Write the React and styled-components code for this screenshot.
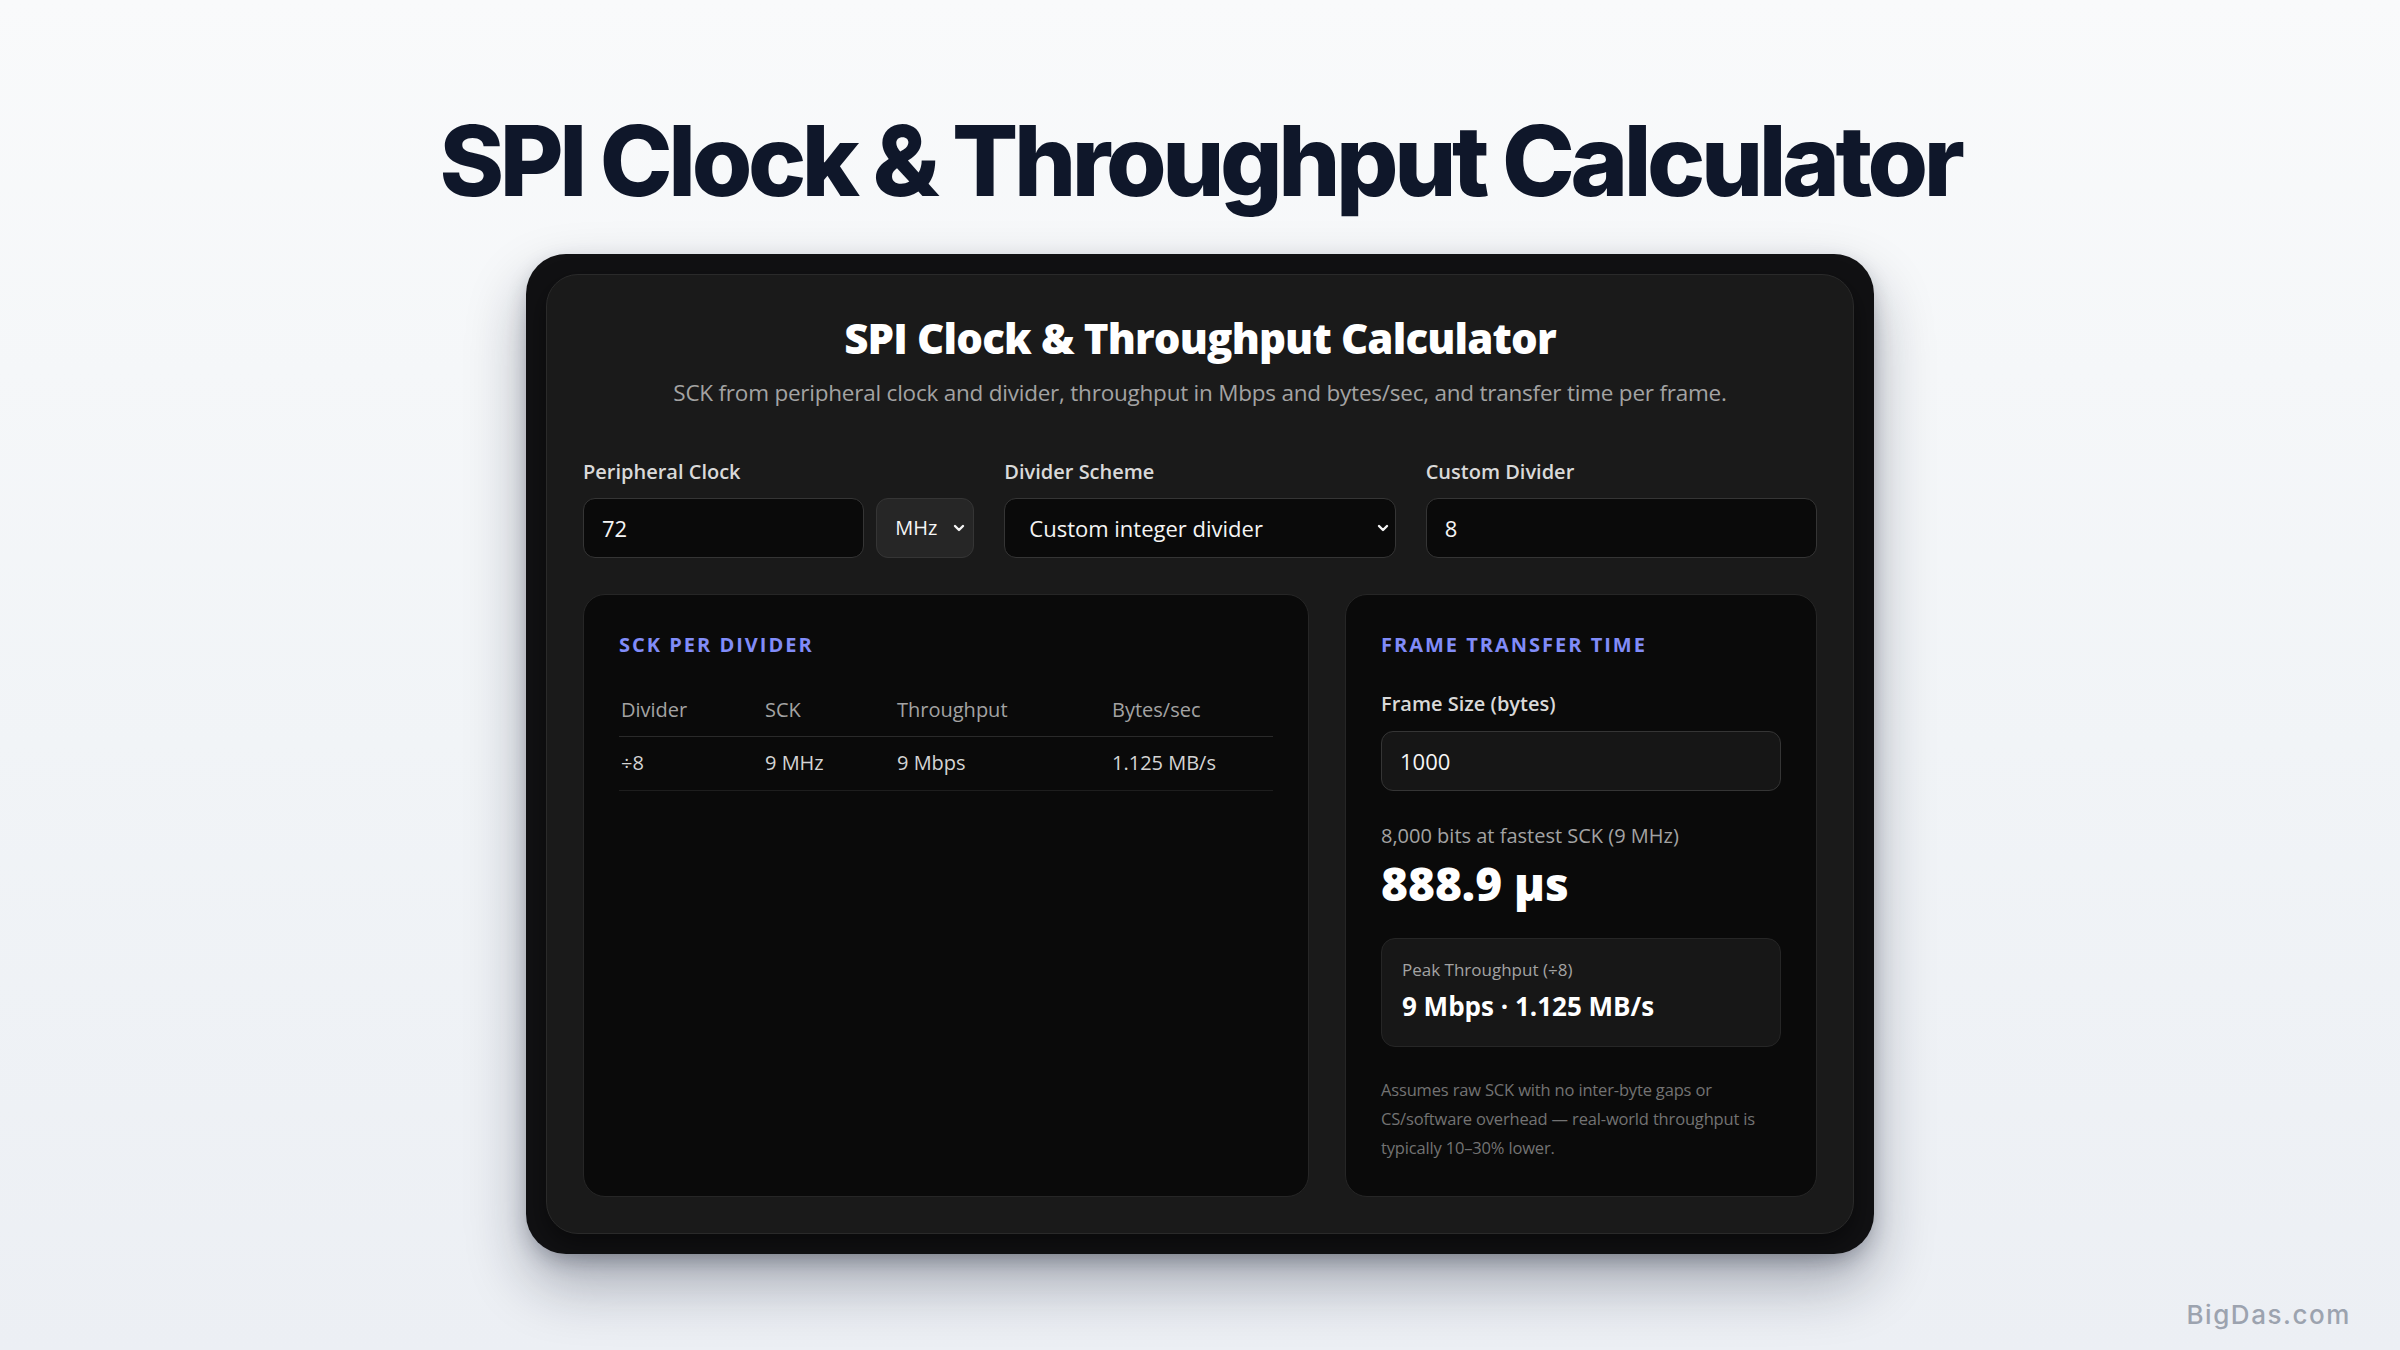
import React, { useState } from "react";
import styled, { createGlobalStyle } from "styled-components";

const GlobalStyle = createGlobalStyle`
  * { box-sizing: border-box; }
  html, body { margin: 0; padding: 0; }
  body {
    font-family: "Open Sans", "Noto Sans", sans-serif;
    -webkit-font-smoothing: antialiased;
  }
`;

const Page = styled.div`
  position: relative;
  min-height: 1350px;
  display: flex;
  flex-direction: column;
  align-items: center;
  padding-top: 102px;
  background: linear-gradient(180deg, #f9fafb 0%, #f1f4f7 55%, #eceff4 100%);
`;

const PageTitle = styled.h1`
  margin: 0;
  font-family: Inter, "Noto Sans", sans-serif;
  font-weight: 800;
  font-size: 98px;
  line-height: 1.2;
  letter-spacing: -0.045em;
  color: #0f172a;
`;

const Frame = styled.div`
  margin-top: 34px;
  width: 1348px;
  padding: 20px;
  background: #111113;
  border-radius: 40px;
  box-shadow: 0 30px 60px rgba(15, 23, 42, 0.32), 0 8px 20px rgba(15, 23, 42, 0.18);
`;

const Card = styled.div`
  background: #1a1a1a;
  border: 1.5px solid #2a2a2a;
  border-radius: 32px;
  padding: 38px 36px 36.5px;
  box-shadow: 0 10px 24px rgba(0, 0, 0, 0.45);
`;

const CardTitle = styled.h2`
  margin: 0;
  text-align: center;
  font-weight: 800;
  font-size: 42px;
  line-height: 1.2;
  letter-spacing: -0.02em;
  color: #ffffff;
`;

const Subtitle = styled.p`
  margin: 13px 0 0;
  text-align: center;
  font-size: 22.5px;
  line-height: 1.5;
  letter-spacing: -0.01em;
  color: #a3a3a3;
`;

const Controls = styled.div`
  margin-top: 48px;
  display: grid;
  grid-template-columns: repeat(3, 1fr);
  column-gap: 30px;
`;

const Field = styled.div`
  display: flex;
  flex-direction: column;
  gap: ${(p) => p.$gap || 12}px;
  margin-top: ${(p) => p.$top || 0}px;
`;

const Label = styled.label`
  font-size: 20px;
  font-weight: 600;
  line-height: 1.4;
  color: #d9d9d9;
`;

const InputRow = styled.div`
  display: flex;
  gap: 12px;
`;

const TextInput = styled.input`
  flex: 1 1 0;
  min-width: 0;
  width: 100%;
  height: 60px;
  min-height: 60px;
  padding: 0 18px;
  border: 1.5px solid #353535;
  border-radius: 12px;
  background: ${(p) => p.$bg || "#0a0a0a"};
  color: #f5f5f5;
  font-family: inherit;
  font-size: 22px;
  outline: none;
`;

const SelectWrap = styled.div`
  position: relative;
  flex: ${(p) => (p.$fixed ? `0 0 ${p.$fixed}px` : "1")};
`;

const Select = styled.select`
  appearance: none;
  -webkit-appearance: none;
  width: 100%;
  height: 60px;
  padding: 0 ${(p) => p.$padR || 40}px 0 ${(p) => p.$pad || 18}px;
  border: 1.5px solid #353535;
  border-radius: 12px;
  background: ${(p) => p.$bg || "#0a0a0a"};
  color: #f5f5f5;
  font-family: inherit;
  font-size: ${(p) => p.$size || 22}px;
  outline: none;
`;

const Chevron = styled.svg`
  position: absolute;
  right: ${(p) => p.$right || 12}px;
  top: 50%;
  width: 14px;
  height: 14px;
  transform: translateY(-50%);
  pointer-events: none;
`;

const Panels = styled.div`
  margin-top: 36px;
  display: grid;
  grid-template-columns: 1fr 472px;
  gap: 36px;
`;

const Panel = styled.section`
  background: #0a0a0a;
  border: 1.5px solid #262626;
  border-radius: 22px;
  padding: 38.5px 35px 34px;
`;

const SectionTitle = styled.h3`
  margin: 0;
  font-size: 20px;
  font-weight: 700;
  line-height: 1.2;
  letter-spacing: 0.1em;
  text-transform: uppercase;
  color: #818cf8;
`;

const Table = styled.table`
  margin-top: 26px;
  width: 100%;
  border-collapse: collapse;
`;

const Th = styled.th`
  text-align: left;
  font-size: 20px;
  font-weight: 500;
  line-height: 1.4;
  color: #a3a3a3;
  padding: 12.5px 0 12.5px 2px;
  border-bottom: 1px solid #2a2a2a;
  width: ${(p) => p.$w || "auto"};
`;

const Td = styled.td`
  font-size: 20px;
  line-height: 1.4;
  color: #d4d4d4;
  padding: 12px 0 13px 2px;
  border-bottom: 1px solid #1e1e1e;
`;

const Caption = styled.div`
  margin-top: 31px;
  font-size: 20px;
  line-height: 1.4;
  color: #a3a3a3;
`;

const BigValue = styled.div`
  margin-top: 8.5px;
  font-size: 46px;
  font-weight: 800;
  line-height: 1.1;
  color: #ffffff;
`;

const PeakBox = styled.div`
  margin-top: 29px;
  background: #171717;
  border: 1.5px solid #262626;
  border-radius: 14px;
  padding: 19.5px 20px 22px;
`;

const PeakLabel = styled.div`
  font-size: 17px;
  line-height: 1.4;
  color: #a3a3a3;
`;

const PeakValue = styled.div`
  margin-top: 8px;
  font-size: 26px;
  font-weight: 700;
  line-height: 1.3;
  color: #ffffff;
`;

const Note = styled.p`
  margin: 28px 0 0;
  font-size: 16.5px;
  line-height: 29px;
  letter-spacing: -0.01em;
  color: #737373;
`;

const Watermark = styled.div`
  position: absolute;
  right: 49px;
  bottom: 20px;
  font-family: Inter, "Noto Sans", sans-serif;
  font-weight: 500;
  font-size: 26px;
  line-height: 1.2;
  letter-spacing: 0.06em;
  color: #9ca3af;
`;

const ChevronIcon = ({ right }) => (
  <Chevron $right={right} viewBox="0 0 14 14" fill="none">
    <path d="M3 5l4 4 4-4" stroke="#f5f5f5" strokeWidth="2.4" strokeLinecap="round" strokeLinejoin="round" />
  </Chevron>
);

function fmtRate(hz) {
  if (hz >= 1e6) return `${+(hz / 1e6).toFixed(3)} MHz`;
  if (hz >= 1e3) return `${+(hz / 1e3).toFixed(3)} kHz`;
  return `${+hz.toFixed(3)} Hz`;
}
function fmtBits(bps) {
  if (bps >= 1e6) return `${+(bps / 1e6).toFixed(3)} Mbps`;
  if (bps >= 1e3) return `${+(bps / 1e3).toFixed(3)} kbps`;
  return `${+bps.toFixed(3)} bps`;
}
function fmtBytes(Bps) {
  if (Bps >= 1e6) return `${+(Bps / 1e6).toFixed(3)} MB/s`;
  if (Bps >= 1e3) return `${+(Bps / 1e3).toFixed(3)} kB/s`;
  return `${+Bps.toFixed(3)} B/s`;
}
function fmtTime(s) {
  if (s >= 1) return `${s.toFixed(3)} s`;
  if (s >= 1e-3) return `${(s * 1e3).toFixed(1)} ms`;
  if (s >= 1e-6) return `${(s * 1e6).toFixed(1)} µs`;
  return `${(s * 1e9).toFixed(1)} ns`;
}

export default function App() {
  const [clock, setClock] = useState("72");
  const [unit, setUnit] = useState("MHz");
  const [scheme, setScheme] = useState("custom");
  const [divider, setDivider] = useState("8");
  const [frame, setFrame] = useState("1000");

  const mult = unit === "MHz" ? 1e6 : unit === "kHz" ? 1e3 : 1;
  const fclk = (parseFloat(clock) || 0) * mult;
  const div = Math.max(1, parseInt(divider, 10) || 1);
  const sck = fclk / div;
  const bytesPerSec = sck / 8;
  const bits = (parseInt(frame, 10) || 0) * 8;
  const time = sck > 0 ? bits / sck : 0;

  return (
    <>
      <GlobalStyle />
      <Page>
        <PageTitle>SPI Clock &amp; Throughput Calculator</PageTitle>
        <Frame>
          <Card>
            <CardTitle>SPI Clock &amp; Throughput Calculator</CardTitle>
            <Subtitle>
              SCK from peripheral clock and divider, throughput in Mbps and bytes/sec, and transfer time per frame.
            </Subtitle>

            <Controls>
              <Field>
                <Label>Peripheral Clock</Label>
                <InputRow>
                  <TextInput inputMode="decimal" value={clock} onChange={(e) => setClock(e.target.value)} />
                  <SelectWrap $fixed={98}>
                    <Select $bg="#262626" $size={20} $padR={22} value={unit} onChange={(e) => setUnit(e.target.value)}>
                      <option>MHz</option>
                      <option>kHz</option>
                      <option>Hz</option>
                    </Select>
                    <ChevronIcon right={8} />
                  </SelectWrap>
                </InputRow>
              </Field>
              <Field>
                <Label>Divider Scheme</Label>
                <SelectWrap>
                  <Select $pad={24} value={scheme} onChange={(e) => setScheme(e.target.value)}>
                    <option value="custom">Custom integer divider</option>
                    <option value="pow2">Power-of-two prescaler</option>
                  </Select>
                  <ChevronIcon right={6} />
                </SelectWrap>
              </Field>
              <Field>
                <Label>Custom Divider</Label>
                <TextInput inputMode="numeric" value={divider} onChange={(e) => setDivider(e.target.value)} />
              </Field>
            </Controls>

            <Panels>
              <Panel>
                <SectionTitle>SCK per Divider</SectionTitle>
                <Table>
                  <thead>
                    <tr>
                      <Th $w="144px">Divider</Th>
                      <Th $w="132px">SCK</Th>
                      <Th $w="215px">Throughput</Th>
                      <Th>Bytes/sec</Th>
                    </tr>
                  </thead>
                  <tbody>
                    <tr>
                      <Td>÷{div}</Td>
                      <Td>{fmtRate(sck)}</Td>
                      <Td>{fmtBits(sck)}</Td>
                      <Td>{fmtBytes(bytesPerSec)}</Td>
                    </tr>
                  </tbody>
                </Table>
              </Panel>

              <Panel>
                <SectionTitle>Frame Transfer Time</SectionTitle>
                <Field $top={33} $gap={12.5}>
                  <Label>Frame Size (bytes)</Label>
                  <TextInput $bg="#161616" inputMode="numeric" value={frame} onChange={(e) => setFrame(e.target.value)} />
                </Field>
                <Caption>
                  {bits.toLocaleString("en-US")} bits at fastest SCK ({fmtRate(sck)})
                </Caption>
                <BigValue>{fmtTime(time)}</BigValue>
                <PeakBox>
                  <PeakLabel>Peak Throughput (÷{div})</PeakLabel>
                  <PeakValue>
                    {fmtBits(sck)} · {fmtBytes(bytesPerSec)}
                  </PeakValue>
                </PeakBox>
                <Note>
                  Assumes raw SCK with no inter-byte gaps or CS/software overhead — real-world throughput is typically
                  10–30% lower.
                </Note>
              </Panel>
            </Panels>
          </Card>
        </Frame>
        <Watermark>BigDas.com</Watermark>
      </Page>
    </>
  );
}
